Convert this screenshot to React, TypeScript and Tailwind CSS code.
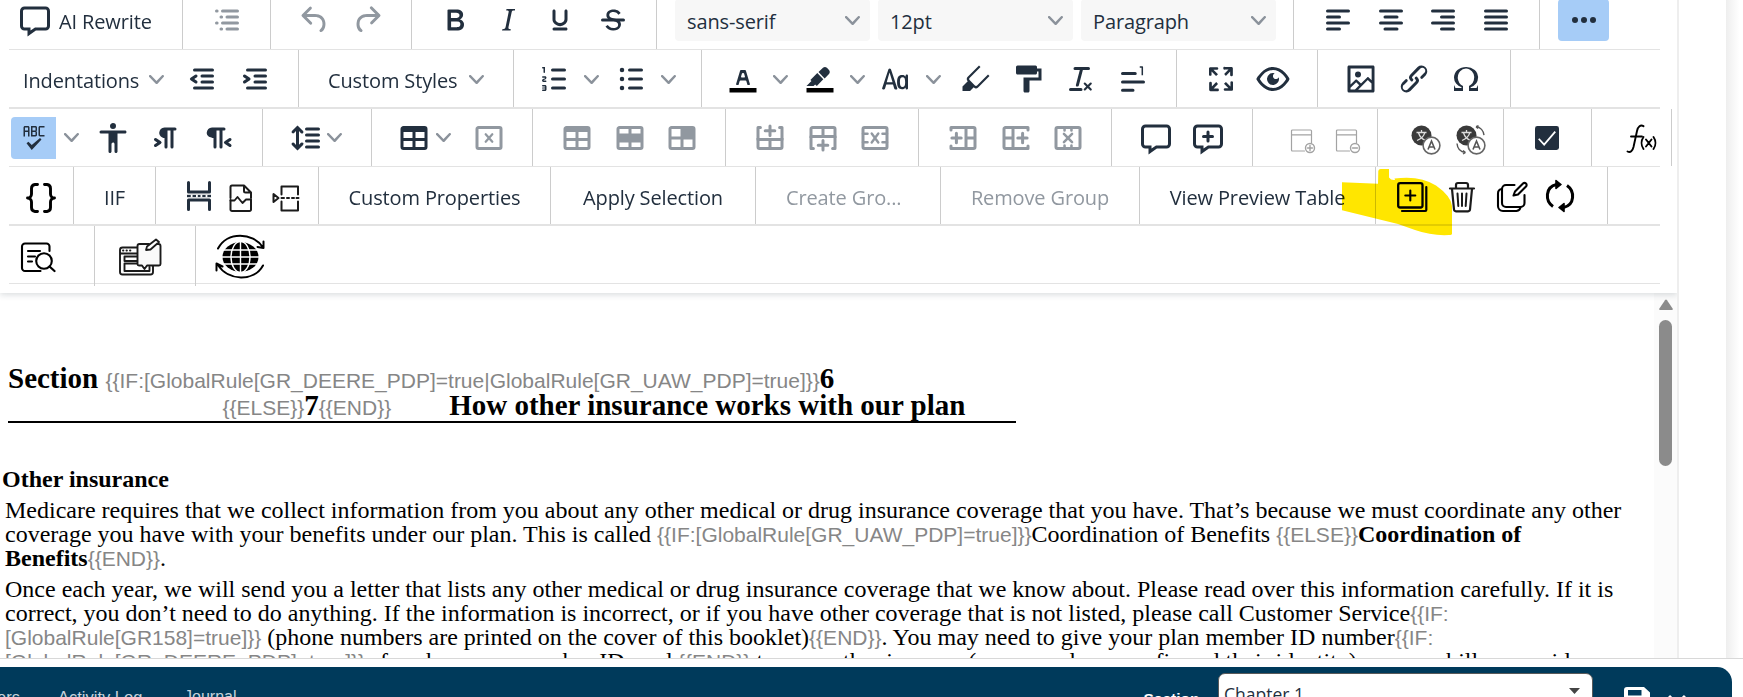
import type { ReactNode } from 'react';

const UI = "font-['Open_Sans','Noto_Sans',sans-serif]";

/* ---------- layout primitives ---------- */

function Row({ className = '', children }: { className?: string; children: ReactNode }) {
  return <div className={`flex w-[1651px] shrink-0 border-[#e3e3e3] ${className}`}>{children}</div>;
}

function Group({ className = '', children }: { className?: string; children?: ReactNode }) {
  return <div className={`flex shrink-0 items-center border-r border-[#cccccc] ${className}`}>{children}</div>;
}

function Label({ className = '', children }: { className?: string; children: ReactNode }) {
  return (
    <span className={`${UI} shrink-0 whitespace-pre pt-[3px] text-[20px] leading-[30px] tracking-[-0.13px] ${className}`}>
      {children}
    </span>
  );
}

function Chevron({ className = '' }: { className?: string }) {
  return (
    <svg width="15" height="15" viewBox="0 0 10 10" className={`shrink-0 fill-[#8b929b] ${className}`}>
      <path d="M8.7 2.2c.3-.3.8-.3 1 0 .4.4.4.9 0 1.2L5.7 7.8c-.3.3-.9.3-1.2 0L.2 3.4a.8.8 0 0 1 0-1.2c.3-.3.8-.3 1.1 0L5 6l3.7-3.8Z" />
    </svg>
  );
}

function Icon({ name, off = false, className = '' }: { name: string; off?: boolean; className?: string }) {
  return (
    <svg
      width="36"
      height="36"
      viewBox="0 0 24 24"
      className={`shrink-0 ${off ? 'fill-[#9198a0] stroke-[#9198a0]' : 'fill-[#222f3e] stroke-[#222f3e]'} ${className}`}
    >
      {ICONS[name]}
    </svg>
  );
}

function Split({ name }: { name: string }) {
  return (
    <div className="flex shrink-0 items-center gap-3">
      <Icon name={name} />
      <Chevron />
    </div>
  );
}

function Select({ children }: { children: string }) {
  return (
    <div className="flex h-[42px] w-[195px] items-center justify-between rounded-[4px] bg-[#f7f7f7] pr-[10px] pl-[12px]">
      <Label>{children}</Label>
      <Chevron />
    </div>
  );
}

/* ---------- 24-unit toolbar icons ---------- */

const P = ({ d }: { d: string }) => <path d={d} stroke="none" fillRule="evenodd" />;
const L = ({ d, w = 2, cap = 'round' }: { d: string; w?: number; cap?: 'round' | 'butt' }) => (
  <path d={d} fill="none" strokeWidth={w} strokeLinecap={cap} strokeLinejoin="round" />
);

const BOX = 'M19 4a2 2 0 0 1 2 2v12a2 2 0 0 1-2 2H5a2 2 0 0 1-2-2V6c0-1.1.9-2 2-2h14Z';

const ICONS: Record<string, ReactNode> = {
  comment: (
    <P d="m9 19 3-2h7c.6 0 1-.4 1-1V6c0-.6-.4-1-1-1H5a1 1 0 0 0-1 1v10c0 .6.4 1 1 1h4v2Zm-2 4v-4H5a3 3 0 0 1-3-3V6a3 3 0 0 1 3-3h14a3 3 0 0 1 3 3v10a3 3 0 0 1-3 3h-6.4L7 23Z" />
  ),
  commentAdd: (
    <P d="m9 19 3-2h7c.6 0 1-.4 1-1V6c0-.6-.4-1-1-1H5a1 1 0 0 0-1 1v10c0 .6.4 1 1 1h4v2Zm-2 4v-4H5a3 3 0 0 1-3-3V6a3 3 0 0 1 3-3h14a3 3 0 0 1 3 3v10a3 3 0 0 1-3 3h-6.4L7 23ZM13 10h2a1 1 0 0 1 0 2h-2v2a1 1 0 0 1-2 0v-2H9a1 1 0 0 1 0-2h2V8a1 1 0 0 1 2 0v2Z" />
  ),
  toc: (
    <>
      <L d="M9 6h10M12 10h7M9 14h10M12 18h7" />
      <L d="M5 6h.4M8 10h.4M5 14h.4M8 18h.4" />
    </>
  ),
  undo: (
    <P d="M6.4 8H12c3.7 0 6.2 2 6.8 5.1.6 2.7-.4 5.6-2.3 6.8a1 1 0 0 1-1-1.8c1.1-.6 1.8-2.7 1.4-4.6-.5-2.1-2.1-3.5-4.9-3.5H6.4l3.3 3.3a1 1 0 1 1-1.4 1.4l-5-5a1 1 0 0 1 0-1.4l5-5a1 1 0 0 1 1.4 1.4L6.4 8Z" />
  ),
  redo: (
    <P d="M17.6 10H12c-2.8 0-4.4 1.4-4.9 3.5-.4 2 .3 4 1.4 4.6a1 1 0 1 1-1 1.8c-2-1.2-2.9-4.1-2.3-6.8.6-3 3-5.1 6.8-5.1h5.6l-3.3-3.3a1 1 0 1 1 1.4-1.4l5 5a1 1 0 0 1 0 1.4l-5 5a1 1 0 0 1-1.4-1.4l3.3-3.3Z" />
  ),
  bold: (
    <P d="M7.8 19c-.3 0-.5 0-.6-.2l-.2-.5V5.7c0-.2 0-.4.2-.5l.6-.2h5c1.5 0 2.7.3 3.5 1 .7.6 1.1 1.4 1.1 2.5a3 3 0 0 1-.6 1.9c-.4.6-1 1-1.6 1.2.4.1.9.3 1.3.6s.8.7 1 1.2c.4.4.5 1 .5 1.6 0 1.3-.4 2.3-1.3 3-.8.7-2.1 1-3.8 1H7.8Zm5-8.3c.6 0 1.2-.1 1.6-.5.4-.3.6-.7.6-1.3 0-1.1-.8-1.7-2.3-1.7H9.3v3.5h3.4Zm.5 6c.7 0 1.3-.1 1.7-.4.4-.4.6-.9.6-1.5s-.2-1-.7-1.4c-.4-.3-1-.4-2-.4H9.4v3.8h4Z" />
  ),
  italic: (
    <P d="m16.7 4.7-.1.9h-.3c-.6 0-1 0-1.4.3-.3.3-.4.6-.5 1.1l-2.1 9.8v.6c0 .5.4.8 1.4.8h.2l-.2.8H8l.2-.8h.2c1.1 0 1.8-.5 2-1.5l2-9.8.1-.5c0-.6-.4-.8-1.4-.8h-.3l.2-.9h5.8Z" />
  ),
  underline: (
    <P d="M16 5c.6 0 1 .4 1 1v5.5a4 4 0 0 1-.4 1.8l-1 1.4a5.3 5.3 0 0 1-5.5 1 5 5 0 0 1-1.6-1c-.5-.4-.8-.9-1.1-1.4a4 4 0 0 1-.4-1.8V6c0-.6.4-1 1-1s1 .4 1 1v5.5c0 .3 0 .6.2 1l.6.7a3.3 3.3 0 0 0 2.2.8 3.4 3.4 0 0 0 2.2-.8c.3-.2.4-.5.6-.8l.2-.9V6c0-.6.4-1 1-1ZM8 17h8c.6 0 1 .4 1 1s-.4 1-1 1H8a1 1 0 0 1 0-2Z" />
  ),
  strike: (
    <>
      <P d="M15.6 8.5c-.5-.7-1-1.1-1.3-1.3-.6-.4-1.3-.6-2-.6-2.7 0-2.8 1.7-2.8 2.1 0 1.6 1.8 2 3.2 2.3 4.4.9 4.6 2.8 4.6 3.9 0 1.4-.7 4.1-5 4.1A6.2 6.2 0 0 1 7 16.4l1.5-1.1c.4.6 1.6 2 3.7 2 1.6 0 2.5-.4 3-1.2.4-.8.3-2-.8-2.6-.7-.4-1.6-.7-2.9-1-1-.2-3.9-.8-3.9-3.6C7.6 6 10.3 5 12.4 5c2.9 0 4.2 1.6 4.7 2.4l-1.5 1.1Z" />
      <P d="M5 11h14a1 1 0 0 1 0 2H5a1 1 0 0 1 0-2Z" />
    </>
  ),
  alignLeft: <L d="M5 6h14M5 10h8M5 14h14M5 18h8" />,
  alignCenter: <L d="M5 6h14M8 10h8M5 14h14M8 18h8" />,
  alignRight: <L d="M5 6h14M11 10h8M5 14h14M11 18h8" />,
  justify: <L d="M5 6h14M5 10h14M5 14h14M5 18h14" />,
  more: (
    <>
      <circle cx="6" cy="12" r="2" stroke="none" />
      <circle cx="12" cy="12" r="2" stroke="none" />
      <circle cx="18" cy="12" r="2" stroke="none" />
    </>
  ),
  outdent: (
    <>
      <L d="M7 6h12M12 10h7M12 14h7M7 18h12" />
      <P d="M8.6 13.2a1 1 0 0 1-1.2 1.6l-3-2a1 1 0 0 1 0-1.6l3-2a1 1 0 0 1 1.2 1.6L6.8 12l1.8 1.2Z" />
    </>
  ),
  indent: (
    <>
      <L d="M7 6h12M12 10h7M12 14h7M7 18h12" />
      <P d="M4.4 13.2 6.2 12l-1.8-1.2a1 1 0 0 1 1.2-1.6l3 2a1 1 0 0 1 0 1.6l-3 2a1 1 0 1 1-1.2-1.6Z" />
    </>
  ),
  ol: (
    <>
      <L d="M11 6h8M11 12h8M11 18h8" />
      <P d="M6 4v3.5c0 .3-.2.5-.5.5a.5.5 0 0 1-.5-.5V5h-.5a.5.5 0 0 1 0-1H6Zm-1 8.8.2.2h1.3c.3 0 .5.2.5.5s-.2.5-.5.5H4.9a1 1 0 0 1-.9-1V13c0-.4.3-.8.6-1l1.2-.4.2-.3a.2.2 0 0 0-.2-.2H4.5a.5.5 0 0 1-.5-.5c0-.3.2-.5.5-.5h1.6c.5 0 .9.4.9 1v.1c0 .4-.3.8-.6 1l-1.2.4-.2.3ZM7 17v2c0 .6-.4 1-1 1H4.5a.5.5 0 0 1 0-1h1.2c.2 0 .3-.1.3-.3 0-.2-.1-.3-.3-.3H4.4a.4.4 0 1 1 0-.8h1.3c.2 0 .3-.1.3-.3 0-.2-.1-.3-.3-.3H4.5a.5.5 0 1 1 0-1H6c.6 0 1 .4 1 1Z" />
    </>
  ),
  ul: (
    <>
      <L d="M11 6h8M11 12h8M11 18h8" />
      <circle cx="6" cy="6" r="1.5" stroke="none" />
      <circle cx="6" cy="12" r="1.5" stroke="none" />
      <circle cx="6" cy="18" r="1.5" stroke="none" />
    </>
  ),
  textColor: (
    <>
      <path d="M3 18h18v3H3z" stroke="none" className="fill-black" />
      <P d="M8.7 16h-.8a.5.5 0 0 1-.5-.6l2.7-9c.1-.3.3-.4.5-.4h2.8c.2 0 .4.1.5.4l2.7 9a.5.5 0 0 1-.5.6h-.8a.5.5 0 0 1-.4-.4l-.7-2.2c0-.3-.3-.4-.5-.4h-3.4c-.2 0-.4.1-.5.4l-.7 2.2c0 .3-.2.4-.4.4Zm2.6-7.6-.6 2a.5.5 0 0 0 .5.6h1.6a.5.5 0 0 0 .5-.6l-.6-2c0-.3-.3-.4-.5-.4h-.4c-.2 0-.4.1-.5.4Z" />
    </>
  ),
  highlight: (
    <>
      <path d="M3 18h18v3H3z" stroke="none" className="fill-black" />
      <P d="M7.7 16.7H3l3.3-3.3-.7-.8L10.2 8l4 4.1-4 4.2c-.2.2-.6.2-.8 0l-.6-.7-1.1 1.1Zm5-7.5L11 7.4l3-2.9a2 2 0 0 1 2.6 0L18 6c.7.7.7 2 0 2.7l-2.9 2.9-1.8-1.8-.5-.6Z" />
    </>
  ),
  changeCase: (
    <P d="M18.4 18.2v-.6c-.5.8-1.3 1.2-2.4 1.2-2.2 0-3.3-1.6-3.3-4.8 0-3.1 1-4.7 3.3-4.7 1.1 0 1.8.3 2.4 1.1v-.6c0-.5.4-.8.8-.8s.8.3.8.8v8.4c0 .5-.4.8-.8.8a.8.8 0 0 1-.8-.8Zm-2-7.4c-1.3 0-1.8.9-1.8 3.2 0 2.4.5 3.3 1.7 3.3 1.3 0 1.8-.9 1.8-3.2 0-2.4-.5-3.3-1.7-3.3ZM10 15.7H5.5l-.8 2.6a1 1 0 0 1-1 .7h-.2a.7.7 0 0 1-.7-1l4-12a1 1 0 0 1 2 0l4 12a.7.7 0 0 1-.8 1h-.2a1 1 0 0 1-1-.7l-.8-2.6Zm-.3-1.5-2-6.5-1.9 6.5h3.9Z" />
  ),
  pen: (
    <P d="M10.5 17.5 8 20H3v-3l3.5-3.5a2 2 0 0 1 0-3L14 3l1 1-7.3 7.3a1 1 0 0 0 0 1.4l3.6 3.6c.4.4 1 .4 1.4 0L20 9l1 1-7.6 7.6a2 2 0 0 1-2.8 0l-.1-.1Z" />
  ),
  painter: (
    <P d="M18 5V4c0-.5-.4-1-1-1H5a1 1 0 0 0-1 1v4c0 .6.5 1 1 1h12c.6 0 1-.4 1-1V7h1v4H9v9c0 .6.4 1 1 1h2c.6 0 1-.4 1-1v-7h8V5h-3Z" />
  ),
  clear: (
    <P d="M13.2 6a1 1 0 0 1 0 .2l-2.6 10a1 1 0 0 1-1 .8h-.2a.8.8 0 0 1-.8-1l2.6-10H8a1 1 0 1 1 0-2h9a1 1 0 0 1 0 2h-3.8ZM5 18h7a1 1 0 0 1 0 2H5a1 1 0 0 1 0-2Zm13 1.5L16.5 18 15 19.5a.7.7 0 0 1-1-1l1.5-1.5-1.5-1.5a.7.7 0 0 1 1-1l1.5 1.5 1.5-1.5a.7.7 0 0 1 1 1L17.500 17l1.5 1.5a.7.7 0 0 1-1 1Z" />
  ),
  footnote: (
    <>
      <L d="M5 8.300h8.500M5 14h14M5 19.500h7" />
      <L d="M16.500 4h1.700v5.500" w={1} cap="butt" />
    </>
  ),
  fullscreen: (
    <P d="m15.3 10-1.2-1.3 2.9-3h-2.3a.9.9 0 1 1 0-1.7H19c.5 0 .9.4.9.9v4.4a.9.9 0 1 1-1.8 0V7l-2.9 3Zm0 4 3 3v-2.3a.9.9 0 1 1 1.7 0V19c0 .5-.4.9-.9.9h-4.4a.9.9 0 1 1 0-1.8H17l-3-2.9 1.3-1.2ZM10 15.4l-2.900 3h2.300a.9.9 0 1 1 0 1.700H5a.9.9 0 0 1-.9-.9v-4.400a.9.9 0 1 1 1.800 0V17l2.900-3 1.200 1.300ZM8.700 10 5.700 7v2.300a.9.9 0 0 1-1.700 0V5c0-.5.4-.9.9-.9h4.400a.9.9 0 0 1 0 1.800H7l3 2.900L8.700 10Z" />
  ),
  preview: (
    <P d="M3.5 12.5c.5.8 1.1 1.6 1.8 2.3 2 2 4.2 3.2 6.7 3.2s4.7-1.2 6.7-3.2a16.2 16.2 0 0 0 2.1-2.8 15.7 15.7 0 0 0-2.1-2.8c-2-2-4.2-3.2-6.7-3.2a9.3 9.3 0 0 0-6.7 3.2A16.2 16.2 0 0 0 3.2 12c0 .2.2.3.3.5Zm-2.4-1 .7-1.2L4 7.8C6.2 5.4 8.9 4 12 4c3 0 5.8 1.4 8.1 3.8a18.2 18.2 0 0 1 2.8 3.7v1l-.7 1.2-2.1 2.5c-2.3 2.4-5 3.8-8.1 3.8-3 0-5.8-1.4-8.1-3.8a18.2 18.2 0 0 1-2.8-3.7 1 1 0 0 1 0-1Zm12-3.3a2 2 0 1 0 2.7 2.6 4 4 0 1 1-2.6-2.6Z" />
  ),
  image: (
    <P d="m5 15.7 3.3-3.2c.3-.3.7-.3 1 0L12 15l4.1-4c.3-.4.8-.4 1 0l2 1.9V5H5v10.7ZM5 18V19h3l2.8-2.9-2-2L5 17.9Zm14-3-2.5-2.4-6.4 6.5H19v-4ZM4 3h16c.6 0 1 .4 1 1v16c0 .6-.4 1-1 1H4a1 1 0 0 1-1-1V4c0-.6.4-1 1-1Zm6 8a2 2 0 1 0 0-4 2 2 0 0 0 0 4Z" />
  ),
  link: (
    <P d="M6.2 12.3a1 1 0 0 1 1.4 1.4l-2 2a2 2 0 1 0 2.6 2.8l4.8-4.8a1 1 0 0 0 0-1.4 1 1 0 1 1 1.4-1.3 2.9 2.9 0 0 1 0 4L9.6 20a3.9 3.9 0 0 1-5.5-5.5l2-2Zm11.6-.6a1 1 0 0 1-1.4-1.4l2-2a2 2 0 1 0-2.6-2.8L11 10.3a1 1 0 0 0 0 1.4A1 1 0 1 1 9.6 13a2.9 2.9 0 0 1 0-4L14.4 4a3.9 3.9 0 0 1 5.5 5.5l-2 2Z" />
  ),
  omega: (
    <P d="M15 18h4l1-2v4h-6v-3.3l1.4-1a6 6 0 0 0 1.8-2.9 6.3 6.3 0 0 0-.1-4.1 5.8 5.8 0 0 0-3-3.2c-.6-.3-1.3-.5-2.1-.5a5.1 5.1 0 0 0-3.9 1.8 6.3 6.3 0 0 0-1.3 6 6.2 6.2 0 0 0 1.8 3l1.4.9V20H4v-4l1 2h4v-.5l-2-1L5.4 15A6.5 6.5 0 0 1 4 11c0-1 .2-1.9.6-2.7A7 7 0 0 1 6.3 6C7.1 5.4 8 5 9 4.5c1-.3 2-.5 3.1-.5a8.8 8.8 0 0 1 5.7 2 7 7 0 0 1 1.7 2.3 6 6 0 0 1 .2 4.8c-.2.7-.6 1.3-1 1.9a7.6 7.6 0 0 1-3.6 2.5v.5Z" />
  ),
  spell: (
    <P d="M6 8v3H5V5c0-.3.1-.5.3-.7.2-.2.4-.3.7-.3h2c.3 0 .5.1.7.3.2.2.3.4.3.7v6H8V8H6Zm0-3v2h2V5H6Zm13 0h-3v5h3v1h-3a1 1 0 0 1-.7-.3 1 1 0 0 1-.3-.7V5c0-.3.1-.5.3-.7.2-.2.4-.3.7-.3h3v1Zm-5 1.5-.1.7c-.1.2-.3.3-.6.3.3 0 .5.1.6.3l.1.7V10c0 .3-.1.5-.3.7a1 1 0 0 1-.7.3h-3V4h3c.3 0 .5.1.7.3.2.2.3.4.3.7v1.5ZM13 10V8h-2v2h2Zm0-3V5h-2v2h2Zm3 5 1 1-6.5 7L7 15.5l1.3-1 2.2 2.2L16 12Z" />
  ),
  access: (
    <P d="M12 2a2 2 0 0 1 2 2 2 2 0 0 1-2 2 2 2 0 0 1-2-2c0-1.1.9-2 2-2Zm8 7h-5v12c0 .6-.4 1-1 1a1 1 0 0 1-1-1v-5c0-.6-.4-1-1-1a1 1 0 0 0-1 1v5c0 .6-.4 1-1 1a1 1 0 0 1-1-1V9H4a1 1 0 1 1 0-2h16c.6 0 1 .4 1 1s-.4 1-1 1Z" />
  ),
  ltr: (
    <P d="M11 5h7a1 1 0 0 1 0 2h-1v11a1 1 0 0 1-2 0V7h-2v11a1 1 0 0 1-2 0v-6c-.5 0-1 0-1.4-.3A3.4 3.4 0 0 1 7.8 10a3.3 3.3 0 0 1 0-2.8 3.4 3.4 0 0 1 1.8-1.8L11 5ZM4.4 16.2 6.2 15l-1.8-1.2a1 1 0 0 1 1.2-1.6l3 2a1 1 0 0 1 0 1.6l-3 2a1 1 0 1 1-1.2-1.6Z" />
  ),
  rtl: (
    <P d="M8 5h8a1 1 0 0 1 0 2h-1v11a1 1 0 0 1-2 0V7h-2v11a1 1 0 0 1-2 0v-6c-.5 0-1 0-1.4-.3A3.4 3.4 0 0 1 4.8 10a3.3 3.3 0 0 1 0-2.8 3.4 3.4 0 0 1 1.8-1.8L8 5Zm12.6 11.2a1 1 0 1 1-1.2 1.6l-3-2a1 1 0 0 1 0-1.6l3-2a1 1 0 1 1 1.2 1.6L18.8 15l1.8 1.2Z" />
  ),
  lineHeight: (
    <>
      <L d="M13 6h8M13 10h8M13 14h8M13 18h8" />
      <P d="M7 3.6l3.7 3.7a1 1 0 0 1-1.3 1.5h-.1L8 7.3v9.2l1.3-1.3a1 1 0 0 1 1.3 0h.1c.4.4.4 1 0 1.3v.1L7 20.4l-3.7-3.7a1 1 0 0 1 1.3-1.5h.1L6 16.7V7.4L4.7 8.7a1 1 0 0 1-1.3 0h-.1a1 1 0 0 1 0-1.3v-.1L7 3.6Z" />
    </>
  ),
  table: <P d={BOX + 'M5 14v4h6v-4H5Zm14 0h-6v4h6v-4Zm0-6h-6v4h6V8ZM5 12h6V8H5v4Z'} />,
  tableDelete: (
    <>
      <P d={BOX + 'M5 6v12h14V6H5Z'} />
      <L d="m9.8 9.5 4.4 5M14.2 9.5l-4.4 5" w={1.5} />
    </>
  ),
  tableRow: <P d={BOX + 'M5 6v3h6V6H5Zm8 0v3h6V6h-6ZM5 15v3h6v-3H5Zm8 0v3h6v-3h-6Z'} />,
  tableCell: <P d={BOX + 'M5 6v5h6V6H5Zm0 7v5h6v-5H5Zm8 0v5h6v-5h-6Z'} />,
  rowAbove: (
    <>
      <P d="M3 12h18v6a2 2 0 0 1-2 2H5a2 2 0 0 1-2-2v-6Zm2 2v4h6v-4H5Zm8 0v4h6v-4h-6Z" />
      <L d="M4 13V5h1.6M20 13V5h-1.6M12 4v6.400M8.800 7.200h6.400" />
    </>
  ),
  rowBelow: (
    <>
      <P d="M5 4h14a2 2 0 0 1 2 2v6H3V6c0-1.1.9-2 2-2Zm0 2v4h6V6H5Zm8 0v4h6V6h-6Z" />
      <L d="M4 11v8h1.600M20 11v8h-1.600M12 13.600V20M8.800 16.800h6.400" />
    </>
  ),
  rowDelete: (
    <>
      <L d="M4 8.800V6a1 1 0 0 1 1-1h14a1 1 0 0 1 1 1v12a1 1 0 0 1-1 1H5a1 1 0 0 1-1-1V6" />
      <L d="M4 9.200h3M4 14.800h3M17 9.200h3M17 14.800h3" w={1.7} />
      <L d="m9.800 9 4.400 6M14.200 9l-4.400 6" w={1.6} />
    </>
  ),
  colBefore: (
    <>
      <P d="M13 4h6a2 2 0 0 1 2 2v12a2 2 0 0 1-2 2h-6V4Zm2 2v5h4V6h-4Zm0 7v5h4v-5h-4Z" />
      <L d="M13 5H4v1.600M13 19H4v-1.600M7.600 8.800v6.400M4.600 12h6.200" />
    </>
  ),
  colAfter: (
    <>
      <P d="M5 4h6v16H5a2 2 0 0 1-2-2V6c0-1.1.9-2 2-2Zm0 2v5h4V6H5Zm0 7v5h4v-5H5Z" />
      <L d="M11 5h9v1.600M11 19h9v-1.600M16.400 8.800v6.400M13.200 12h6.200" />
    </>
  ),
  colDelete: (
    <>
      <L d="M4 8.800V6a1 1 0 0 1 1-1h14a1 1 0 0 1 1 1v12a1 1 0 0 1-1 1H5a1 1 0 0 1-1-1V6" />
      <L d="M9.700 5v2M14.300 5v2M9.700 17v2M14.300 17v2" w={1.7} />
      <L d="m9.300 9.300 5.400 5.400M14.700 9.300l-5.400 5.400" w={1.7} />
    </>
  ),
  checkbox: (
    <>
      <rect x="4" y="4" width="16" height="16" rx="1.6" stroke="none" />
      <path d="m6.500 12.500 3.600 3.900 7.400-8.600" fill="none" strokeWidth="1.2" className="stroke-white" />
    </>
  ),
  pageBreak: (
    <>
      <L d="M5 3v6.300h14V3M5 21v-6.300h14V21" w={2} />
      <L d="M4 12h16" w={1.6} cap="butt" />
      <path d="M6.500 12h1.200M10 12h1.200M13 12h1.200M16.400 12h1.200" strokeWidth="1.8" className="stroke-white" />
    </>
  ),
};

/* ---------- custom toolbar icons ---------- */

function Art({ w, h, className = '', children }: { w: number; h: number; className?: string; children: ReactNode }) {
  return (
    <svg width={w} height={h} viewBox={`0 0 ${w} ${h}`} fill="none" strokeLinecap="round" strokeLinejoin="round" className={`shrink-0 stroke-black ${className}`}>
      {children}
    </svg>
  );
}

function CalendarIcon({ plus = false }: { plus?: boolean }) {
  return (
    <Art w={26} h={28} className="mt-[6px] stroke-[#a3a3a3]!">
      <path d="M14.500 24H2.500a1 1 0 0 1-1-1V4a1 1 0 0 1 1-1h18a1 1 0 0 1 1 1v12M1.500 7.800h20" strokeWidth="1.2" />
      <circle cx="20" cy="21" r="4.5" strokeWidth="1.4" />
      <path d={plus ? 'M17.500 21h5M20 18.500v5' : 'M17.500 21h5'} strokeWidth="1.4" />
    </Art>
  );
}

function TranslateIcon({ swap = false }: { swap?: boolean }) {
  return (
    <svg width="30" height="30" viewBox="0 0 30 30" fill="none" className="mt-[5px] shrink-0">
      <circle cx="10.5" cy="10.5" r="10" fill="#3a3a3a" />
      <path d="M5.500 7.500h10M10.500 5v2.500M13.800 7.700C12.800 11.500 10 14 6 15.500M7.500 7.700c1 3.500 3.500 6.300 7 7.600" stroke="#dddddd" strokeWidth="1.3" />
      <circle cx="20.5" cy="20.5" r="8.4" fill="#fff" stroke="#666" strokeWidth="1.6" />
      <path d="M17 24.500 20.500 16l3.500 8.500M18.200 22h4.600" stroke="#555" strokeWidth="1.6" />
      {swap && (
        <path d="M20 1.700c4.500.3 7.500 4 8 8.500M20 1.700l2.500-1M20 1.700l2 1.800M1 18.500c.4 5 3.500 8.500 8.500 9M9.500 27.500 7 25.500M9.500 27.500 7 29" stroke="#555" strokeWidth="1.4" />
      )}
    </svg>
  );
}

function FxIcon() {
  return (
    <Art w={32} h={32} className="mt-[3px]">
      <path d="M1.500 28.500c3 1.500 5-.5 6-4.500L11 8c1-4.500 3.500-6.500 6.500-4.800M5 13.500h11" strokeWidth="1.9" />
      <path d="M17.500 14c-2.500 3.500-2.500 8.500 0 12M27.500 14c2.500 3.500 2.500 8.500 0 12M20 16.500l5.500 7M25.500 16.500l-5.500 7" strokeWidth="1.9" />
    </Art>
  );
}

const BracesIcon = () => (
  <Art w={32} h={32} className="mt-[5px]">
    <path d="M12.500 2.500H10A4 4 0 0 0 6.500 6.500v5.500c0 2-1.500 4-4 4 2.500 0 4 2 4 4v5.500a4 4 0 0 0 3.500 4h2.500M19.500 2.500H22a4 4 0 0 1 3.500 4v5.500c0 2 1.500 4 4 4-2.500 0-4 2-4 4v5.500a4 4 0 0 1-3.500 4h-2.500" strokeWidth="2.9" />
  </Art>
);

const BrokenDocIcon = () => (
  <Art w={28} h={30} className="ml-[10px] mt-[4px] stroke-[#1b1b1b]!">
    <path d="M3.500 15V4a1.500 1.500 0 0 1 1.500-1.500h12l7 7V15M17 2.500v5.500a1.500 1.500 0 0 0 1.500 1.500H24M3.500 17v9.500A1.500 1.500 0 0 0 5 28h17.500a1.500 1.500 0 0 0 1.500-1.500V17" strokeWidth="2" />
    <path d="M3.500 17.500h4l3-3.500 5 6 3.500-3.500h5" strokeWidth="1.9" />
  </Art>
);

const PageInsertIcon = () => (
  <Art w={28} h={30} className="ml-[17px] mt-[4px] stroke-[#1b1b1b]!">
    <path d="M9.500 11.500V3.500h16.500v8M9.500 18.500V27.500h16.500v-9" strokeWidth="2" />
    <path d="M1.500 11v8l5-4ZM9.500 15h2.500M15 15h2M20 15h2M24.500 15h2" strokeWidth="2" />
  </Art>
);

const CopyPlusIcon = () => (
  <Art w={32} h={32} className="mt-[2px]">
    <rect x="2.2" y="2.2" width="24.3" height="24.3" rx="2" strokeWidth="2.3" />
    <path d="M14.300 9.500v10M9.300 14.500h10" strokeWidth="2.1" />
    <path d="M30.300 6v23a1 1 0 0 1-1 1H6" strokeWidth="2.2" />
  </Art>
);

const TrashIcon = () => (
  <Art w={32} h={32} className="ml-[18px] mt-[2px] stroke-[#1b1b1b]!">
    <path d="M4 7.500h24M10 7V4a2 2 0 0 1 2-2h8a2 2 0 0 1 2 2v3M6 8l2 20.500a2 2 0 0 0 2 1.800h12a2 2 0 0 0 2-1.800L26 8" strokeWidth="2.2" />
    <path d="M11.500 12.500l.8 12.500M16 12.500V25M20.500 12.500l-.8 12.500" strokeWidth="2" />
  </Art>
);

const EditCopyIcon = () => (
  <Art w={32} h={32} className="ml-[18px] mt-[2px]">
    <path d="M18.500 4H10a4 4 0 0 0-4 4v14a4 4 0 0 0 4 4h14.500a4 4 0 0 0 4-4V14" strokeWidth="2.1" />
    <path d="M6 8a4.500 4.500 0 0 0-4 4.500V25a5 5 0 0 0 5 5h13.500a4.500 4.500 0 0 0 4-4" strokeWidth="2.1" />
    <path d="m17.500 14.500 1.500-4 8-8a2 2 0 0 1 3 3l-8 8-4.500 1Z" strokeWidth="2.1" />
  </Art>
);

const SyncIcon = () => (
  <Art w={32} h={34} className="ml-[16px] mt-[1px]">
    <path d="M9 27.500C1 22 1 8 12.500 5.500M23 6.500C31 12 31 26 19.500 28.500" strokeWidth="3" strokeLinecap="butt" />
    <path d="M17 5.500 12 1.500v8ZM15 28.500l5-4v8Z" className="fill-black" strokeWidth="1.6" />
  </Art>
);

const FindInPageIcon = () => (
  <Art w={36} h={32} className="mt-px">
    <path d="M20.500 30H5a3 3 0 0 1-3-3V5.500a3 3 0 0 1 3-3h21.500a3 3 0 0 1 3 3V10M8 10h12M8 15.500h7M8 20.500h4" strokeWidth="2.1" />
    <circle cx="24" cy="20" r="7.8" strokeWidth="2.1" />
    <path d="m29.500 25.500 5 4.500" strokeWidth="2.2" />
  </Art>
);

const PageNoteIcon = () => (
  <Art w={44} h={40} className="mt-[3px] stroke-[#1b1b1b]!">
    <path d="M19 9.500H4.500a2.500 2.500 0 0 0-2.500 2.500v22a2.500 2.500 0 0 0 2.500 2.500h28a2.500 2.500 0 0 0 2.500-2.500v-6M2 15.500h17M5 12.500h.4M8.500 12.500h.4M12 12.500h.4M19 18.500H6.500V23H19M19 25.500H6.500v7.500h25V29" strokeWidth="1.9" />
    <path d="M31 6H21.500a2 2 0 0 0-2 2v18a1.500 1.500 0 0 0 1.500 1.500h3L26.500 31l2.500-3.500h12a1.500 1.500 0 0 0 1.500-1.500V8a2 2 0 0 0-2-2H38" className="fill-[#fafafa]" strokeWidth="1.9" />
    <path d="m28 12 1-3.500L38 1.500l3 2.500-8.500 7.500Z" className="fill-white" strokeWidth="1.8" />
  </Art>
);

const GlobeIcon = () => (
  <Art w={52} h={46} className="mt-px ml-[19px]">
    <ellipse cx="25.5" cy="23" rx="18" ry="15" className="fill-black" stroke="none" />
    <g className="stroke-white" strokeWidth="1.4">
      <path d="M25.500 7v32M7 23h37M9 16h33M9 30h33" />
      <ellipse cx="25.5" cy="23" rx="9.5" ry="15.5" />
    </g>
    <path d="M3 14.500C12-3 38-2 48 13.500M48.500 7.500v6.500l-6-1M48 31.500C39 48 13 47 3 31M1.500 36.500v-7l6 3" strokeWidth="2" />
  </Art>
);

/* ---------- document text ---------- */

const Code = ({ children }: { children: string }) => (
  <span className="font-['Liberation_Sans',sans-serif] text-[21px] leading-none font-normal text-[#868686]">{children}</span>
);

const TextLine = ({ children }: { children: ReactNode }) => <div className="h-6 whitespace-pre">{children}</div>;

export default function App() {
  return (
    <div className="flex h-[697px] w-[1743px] flex-col overflow-hidden bg-white text-[#222f3e]">
      <div className="flex h-[658px] shrink-0">
        <div className="flex w-[1677px] shrink-0 flex-col overflow-hidden bg-white">
          {/* toolbar */}
          <header className="relative z-10 flex h-[293px] shrink-0 flex-col bg-white pl-[9px] shadow-[0_2px_6px_rgba(34,47,62,0.16)]">
            <Row className="-mt-[9px] h-[59px] border-b">
              <Group className="w-[174px] pl-2">
                <Icon name="comment" />
                <Label className="ml-1.5">AI Rewrite</Label>
              </Group>
              <Group className="w-[88px] pl-[26px]">
                <Icon name="toc" off />
              </Group>
              <Group className="w-[141px] gap-[16px] pl-[26px]">
                <Icon name="undo" off />
                <Icon name="redo" off />
              </Group>
              <Group className="w-[245px] gap-[16.5px] pl-[25px]">
                <Icon name="bold" />
                <Icon name="italic" />
                <Icon name="underline" />
                <Icon name="strike" />
              </Group>
              <Group className="w-[637px] gap-2 pl-[18px]">
                <Select>sans-serif</Select>
                <Select>12pt</Select>
                <Select>Paragraph</Select>
              </Group>
              <Group className="w-[246px] gap-[16.5px] pl-[26px]">
                <Icon name="alignLeft" />
                <Icon name="alignCenter" />
                <Icon name="alignRight" />
                <Icon name="justify" />
              </Group>
              <div className="ml-[18px] flex h-[42px] w-[51px] items-center justify-center self-center rounded-[4px] bg-[#a6ccf7]">
                <Icon name="more" />
              </div>
            </Row>

            <Row className="h-[59px] border-b-2">
              <Group className="w-[290px] pt-px pl-[14px]">
                <Label className="w-[126px]">Indentations</Label>
                <Chevron />
                <div className="ml-5 flex gap-[16.5px]">
                  <Icon name="outdent" />
                  <Icon name="indent" />
                </div>
              </Group>
              <Group className="w-[215px] pt-px pl-[29px]">
                <Label className="w-[141px]">Custom Styles</Label>
                <Chevron />
              </Group>
              <Group className="w-[188px] gap-[14px] pt-px pl-[22px]">
                <Split name="ol" />
                <Split name="ul" />
              </Group>
              <Group className="w-[475px] gap-[13.5px] pt-px pl-[23px]">
                <Split name="textColor" />
                <Split name="highlight" />
                <Split name="changeCase" />
                <div className="ml-[3px] flex gap-[16.5px]">
                  <Icon name="pen" />
                  <Icon name="painter" />
                  <Icon name="clear" />
                  <Icon name="footnote" />
                </div>
              </Group>
              <Group className="w-[141px] gap-[16px] pt-px pl-[26px]">
                <Icon name="fullscreen" />
                <Icon name="preview" />
              </Group>
              <Group className="w-[193px] gap-[16.5px] pt-px pl-[25px]">
                <Icon name="image" />
                <Icon name="link" />
                <Icon name="omega" />
              </Group>
            </Row>

            <Row className="h-[58px] border-b">
              <Group className="w-[254px] pl-[2px]">
                <div className="flex h-[42px] w-[45px] items-center justify-center rounded-l-[4px] bg-[#a6ccf7]">
                  <Icon name="spell" />
                </div>
                <Chevron className="ml-2" />
                <div className="ml-4 flex gap-[16.5px]">
                  <Icon name="access" />
                  <Icon name="ltr" />
                  <Icon name="rtl" />
                </div>
              </Group>
              <Group className="w-[109px] gap-1 pl-6">
                <Icon name="lineHeight" />
                <Chevron />
              </Group>
              <Group className="w-[161px] gap-1 pl-6">
                <Icon name="table" />
                <Chevron />
                <Icon name="tableDelete" off className="ml-4" />
              </Group>
              <Group className="w-[193px] gap-[16.5px] pl-[26px]">
                <Icon name="table" off />
                <Icon name="tableRow" off />
                <Icon name="tableCell" off />
              </Group>
              <Group className="w-[193px] gap-[16.5px] pl-[26px]">
                <Icon name="rowAbove" off />
                <Icon name="rowBelow" off />
                <Icon name="rowDelete" off />
              </Group>
              <Group className="w-[193px] gap-[16.5px] pl-[26px]">
                <Icon name="colBefore" off />
                <Icon name="colAfter" off />
                <Icon name="colDelete" off />
              </Group>
              <Group className="w-[141px] gap-[16px] pl-[26px]">
                <Icon name="comment" />
                <Icon name="commentAdd" />
              </Group>
              <Group className="w-[125px] gap-[19px] pl-[37px]">
                <CalendarIcon plus />
                <CalendarIcon />
              </Group>
              <Group className="w-[126px] gap-[15px] pl-[33px]">
                <TranslateIcon />
                <TranslateIcon swap />
              </Group>
              <Group className="w-[88px] pl-[25px]">
                <Icon name="checkbox" />
              </Group>
              <Group className="w-[80px] pl-[34px]">
                <FxIcon />
              </Group>
            </Row>

            <Row className="h-[59px] border-b-2">
              <Group className="w-[65px] pl-4">
                <BracesIcon />
              </Group>
              <Group className="w-[82px] justify-center">
                <Label className="pt-[4px]">IIF</Label>
              </Group>
              <Group className="w-[163px] pl-[25px]">
                <Icon name="pageBreak" />
                <BrokenDocIcon />
                <PageInsertIcon />
              </Group>
              <Group className="w-[232px] justify-center">
                <Label className="pt-[4px]">Custom Properties</Label>
              </Group>
              <Group className="w-[205px] justify-center">
                <Label className="pt-[4px]">Apply Selection</Label>
              </Group>
              <Group className="w-[185px] pl-[30px]">
                <Label className="pt-[4px] text-[#9198a0]">Create Gro...</Label>
              </Group>
              <Group className="w-[199px] justify-center">
                <Label className="pt-[4px] text-[#9198a0]">Remove Group</Label>
              </Group>
              <Group className="w-[236px] justify-center">
                <Label className="pt-[4px]">View Preview Table</Label>
              </Group>
              <Group className="relative w-[232px] pl-5">
                <CopyPlusIcon />
                <TrashIcon />
                <EditCopyIcon />
                <SyncIcon />
                <svg width="112" height="72" viewBox="1341 168 112 72" className="pointer-events-none absolute top-[1px] left-[-35px] mix-blend-multiply">
                  <path
                    d="M1342 182.300 1378 183.700 1378.300 171q.3-2 2.400-2H1389V177.500q2 3 6 2.500L1394.500 178.500Q1420 175 1436 185.500 1451 196 1452 206V233.500Q1452 235 1449 235 1432 236 1415 230L1398 224 1342 210.300Z"
                    fill="#ffe600"
                  />
                </svg>
              </Group>
            </Row>

            <Row className="h-[58px] border-b">
              <Group className="h-[60px] w-[86px] pl-[11px]">
                <FindInPageIcon />
              </Group>
              <Group className="h-[60px] w-[101px] pl-[23px]">
                <PageNoteIcon />
              </Group>
              <div className="flex h-[60px] items-center">
                <GlobeIcon />
              </div>
            </Row>
          </header>

          {/* document */}
          <div className="flex min-h-0 grow">
            <main className="w-[1654px] shrink-0 overflow-hidden pt-[71px] font-['Liberation_Serif',serif] text-[24px] leading-[24px] text-black">
              <h1 className="ml-2 h-[59px] w-[1008px] border-b-2 border-black pt-px text-[29px] leading-[27px] font-bold">
                <div className="h-[27px] whitespace-pre">
                  Section <Code>{'{{IF:[GlobalRule[GR_DEERE_PDP]=true|GlobalRule[GR_UAW_PDP]=true]}}'}</Code>6
                </div>
                <div className="flex h-[27px] items-baseline whitespace-pre pl-[214.5px]">
                  <Code>{'{{ELSE}}'}</Code>7<Code>{'{{END}}'}</Code>
                  <span className="ml-[58px]">How other insurance works with our plan</span>
                </div>
              </h1>
              <h2 className="mt-[44px] ml-[2px] h-6 font-bold">Other insurance</h2>
              <div className="mt-[7px] ml-[5px]">
                <TextLine>
                  Medicare requires that we collect information from you about any other medical or drug insurance coverage that you have. That’s because we must coordinate any other
                </TextLine>
                <TextLine>
                  coverage you have with your benefits under our plan. This is called <Code>{'{{IF:[GlobalRule[GR_UAW_PDP]=true]}}'}</Code>Coordination of Benefits <Code>{'{{ELSE}}'}</Code>
                  <b>Coordination of</b>
                </TextLine>
                <TextLine>
                  <b>Benefits</b>
                  <Code>{'{{END}}'}</Code>.
                </TextLine>
              </div>
              <div className="mt-[7px] ml-[5px]">
                <TextLine>
                  Once each year, we will send you a letter that lists any other medical or drug insurance coverage that we know about. Please read over this information carefully. If it is
                </TextLine>
                <TextLine>
                  correct, you don’t need to do anything. If the information is incorrect, or if you have other coverage that is not listed, please call Customer Service<Code>{'{{IF:'}</Code>
                </TextLine>
                <TextLine>
                  <Code>{'[GlobalRule[GR158]=true]}}'}</Code> (phone numbers are printed on the cover of this booklet)<Code>{'{{END}}'}</Code>. You may need to give your plan member ID number<Code>{'{{IF:'}</Code>
                </TextLine>
                <TextLine>
                  <Code>{'[GlobalRule[GR_DEERE_PDP]=true]}}'}</Code>
                  <span className="ml-[3px]">{'  for pharmacy member ID card '}</span>
                  <Code>{'{{END}}'}</Code> to your other insurers (once you have confirmed their identity), so your bills are paid
                </TextLine>
              </div>
            </main>
            <div className="flex w-[23px] shrink-0 flex-col items-center bg-[#fbfbfb] pt-[6px]">
              <svg width="14" height="12" viewBox="0 0 14 12" className="fill-[#8b8b8b]">
                <path d="M6 1.200a1.300 1.300 0 0 1 2 0l5.600 8.300a1 1 0 0 1-.8 1.500H1.200a1 1 0 0 1-.8-1.500Z" />
              </svg>
              <div className="mt-[9px] h-[146px] w-[13px] rounded-full bg-[#8b8b8b]" />
            </div>
          </div>
        </div>
        <div className="w-[49px] shrink-0 border-l-2 border-[#eeeeee] bg-white" />
        <div className="grow bg-linear-to-r from-[#eeeeee] to-white to-80%" />
      </div>

      <div className="h-[9px] shrink-0 border-t border-[#d8d8d8] bg-white" />

      {/* bottom bar */}
      <footer className="flex h-[90px] w-[1732px] shrink-0 rounded-tr-[15px] bg-[#003a5b] font-['Liberation_Sans',sans-serif] text-[16.5px] leading-[20px] text-[#c6d3db]">
        <nav className="flex w-[1143.5px] pt-[20px] whitespace-nowrap">
          <span className="flex w-[58px] justify-start">
            <span className="-ml-[3px]">ers</span>
          </span>
          <span className="w-[126px]">Activity Log</span>
          <span className="text-[16px]">Journal</span>
        </nav>
        <span className="w-[74.5px] pt-[22px] text-[15.5px] font-bold text-white">Section</span>
        <div className="mt-[6px] flex h-[44px] w-[375px] justify-between rounded-[7px] border border-[#5a5a5a] bg-white pt-[4px] pr-[12px] pl-[5px]">
          <span className={`${UI} text-[17.5px] leading-[32px] text-[#222f3e]`}>Chapter 1</span>
          <svg width="11" height="6" viewBox="0 0 11 6" className="mt-[10px] fill-[#444444]">
            <path d="M0 0h11L5.500 6Z" />
          </svg>
        </div>
        <svg width="27" height="27" viewBox="0 0 27 27" className="mt-[20px] ml-[31px] fill-white">
          <path fillRule="evenodd" d="M3 0h17l6 5.500V24a3 3 0 0 1-3 3H3a3 3 0 0 1-3-3V3a3 3 0 0 1 3-3Zm1 3v5.500h13.500V3H4Z" />
        </svg>
        <svg width="22" height="20" viewBox="0 0 22 20" className="mt-[27px] ml-[16px]" fill="none" stroke="#fff" strokeWidth="3">
          <path d="M2 2l15 15M18 2 3 17" />
        </svg>
      </footer>
    </div>
  );
}
